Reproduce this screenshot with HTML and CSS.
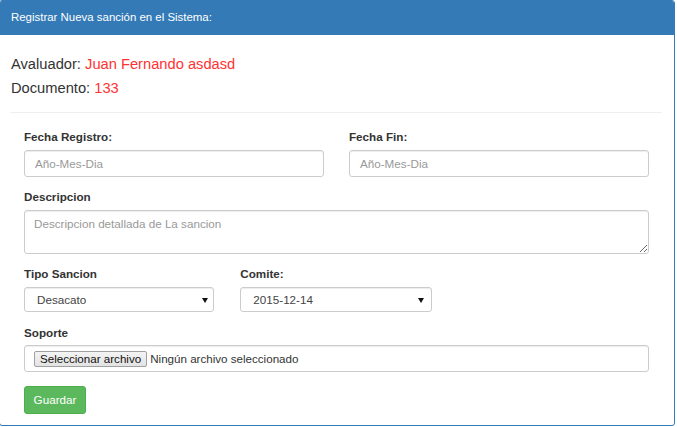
FILE: index.html
```html
<!DOCTYPE html>
<html lang="es">
<head>
<meta charset="utf-8">
<title>Registrar Nueva sanción</title>
<link rel="stylesheet" href="styles.css">
</head>
<body>
<div class="panel">
  <div class="panel-heading">Registrar Nueva sanción en el Sistema:</div>
  <div class="panel-body">
    <div class="info">
      <div class="info-line">Avaluador: <span class="val">Juan Fernando asdasd</span></div>
      <div class="info-line">Documento: <span class="val">133</span></div>
    </div>
    <hr class="divider">
    <form class="form">
      <div class="row two">
        <div class="group">
          <label class="lbl">Fecha Registro:</label>
          <input class="ctrl input" type="text" placeholder="Año-Mes-Dia">
        </div>
        <div class="group">
          <label class="lbl">Fecha Fin:</label>
          <input class="ctrl input" type="text" placeholder="Año-Mes-Dia">
        </div>
      </div>
      <div class="group">
        <label class="lbl">Descripcion</label>
        <textarea class="ctrl area" placeholder="Descripcion detallada de La sancion"></textarea>
      </div>
      <div class="row three">
        <div class="group">
          <label class="lbl">Tipo Sancion</label>
          <div class="select-wrap">
            <select class="ctrl select"><option>Desacato</option></select>
          </div>
        </div>
        <div class="group">
          <label class="lbl">Comite:</label>
          <div class="select-wrap wide">
            <select class="ctrl select"><option>2015-12-14</option></select>
          </div>
        </div>
      </div>
      <div class="group last">
        <label class="lbl">Soporte</label>
        <div class="ctrl file">
          <button type="button" class="file-btn">Seleccionar archivo</button>
          <span class="file-name">Ningún archivo seleccionado</span>
        </div>
      </div>
      <button type="button" class="btn">Guardar</button>
    </form>
  </div>
</div>
</body>
</html>
```

FILE: styles.css
```css
html, body {
  margin: 0;
  padding: 0;
  background: #fff;
  overflow: hidden;
}
body {
  font-family: "Liberation Sans", Arial, Helvetica, sans-serif;
  color: #333;
  font-size: 11.67px;
}
.panel {
  margin-left: -1px;
  width: 676px;
  height: 426px;
  box-sizing: border-box;
  border: 1px solid #337ab7;
  border-radius: 3px;
  overflow: hidden;
}
.panel-heading {
  height: 34px;
  box-sizing: border-box;
  background: #337ab7;
  color: #fff;
  display: flex;
  align-items: center;
  padding: 0 11px 2px 11px;
  font-size: 11.45px;
}
.panel-body {
  padding: 12px 12px 0 11px;
}
.info {
  margin-top: 5px;
}
.info-line {
  font-size: 14.7px;
  line-height: 24px;
  color: #333;
}
.val {
  color: #ff3333;
}
.divider {
  margin: 12px 0 16px 0;
  border: 0;
  border-top: 1px solid #eee;
  height: 0;
}
.form {
  margin: 0;
  padding: 0 13px;
}
.row {
  display: grid;
}
.row.two {
  grid-template-columns: 1fr 1fr;
  column-gap: 25px;
}
.row.three {
  grid-template-columns: 1fr 1fr 1fr;
  column-gap: 24px;
}
.group {
  margin-bottom: 12.5px;
}
.group.last {
  margin-bottom: 13.5px;
}
.lbl {
  display: block;
  font-weight: bold;
  line-height: 16.5px;
  margin-bottom: 4px;
  color: #333;
}
.ctrl {
  display: block;
  width: 100%;
  box-sizing: border-box;
  border: 1px solid #ccc;
  border-radius: 3px;
  box-shadow: inset 0 1px 1px rgba(0,0,0,.075);
  background: #fff;
  font-family: "Liberation Sans", Arial, Helvetica, sans-serif;
  font-size: 11.67px;
  color: #555;
  margin: 0;
  outline: none;
}
.ctrl::placeholder {
  color: #999;
}
.input {
  height: 27px;
  padding: 4px 10px;
}
.area {
  height: 44px;
  padding: 5px 9px;
  resize: vertical;
  line-height: 16.5px;
}
.select-wrap {
  position: relative;
  width: 190px;
}
.select-wrap.wide {
  width: 192px;
}
.select-wrap::after {
  content: "";
  position: absolute;
  right: 6px;
  top: 11px;
  width: 0;
  height: 0;
  border-left: 3.5px solid transparent;
  border-right: 3.5px solid transparent;
  border-top: 5px solid #111;
  pointer-events: none;
}
.select-wrap.wide::after {
  right: 8px;
}
.select {
  height: 25.5px;
  padding: 0 20px 0 12px;
  -webkit-appearance: none;
  appearance: none;
  color: #444;
}
.file {
  height: 27px;
  display: flex;
  align-items: center;
  padding: 0 9px;
  gap: 3px;
}
.file-btn {
  height: 16px;
  box-sizing: border-box;
  padding: 0 5px;
  margin: 0;
  border: 1px solid #a0a0a0;
  border-radius: 2px;
  background: linear-gradient(#f4f4f4, #e3e3e3);
  font-family: "Liberation Sans", Arial, Helvetica, sans-serif;
  font-size: 11.6px;
  color: #111;
  line-height: 14px;
}
.file-name {
  font-size: 11.6px;
  color: #333;
}
.btn {
  display: block;
  height: 28px;
  width: 62px;
  box-sizing: border-box;
  padding: 0;
  margin: 0;
  border: 1px solid #4cae4c;
  border-radius: 3px;
  background: #5cb85c;
  color: #fff;
  font-family: "Liberation Sans", Arial, Helvetica, sans-serif;
  font-size: 11.67px;
}
```
